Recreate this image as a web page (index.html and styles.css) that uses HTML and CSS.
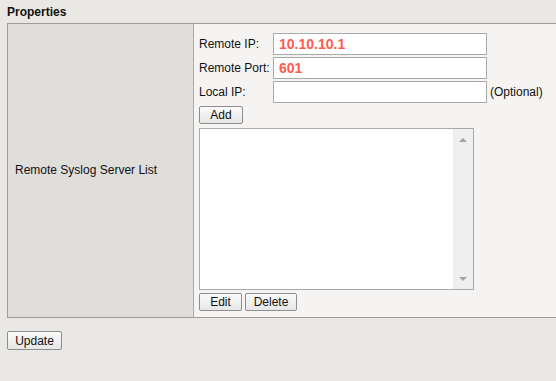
FILE: index.html
```html
<!DOCTYPE html>
<html>
<head>
<meta charset="utf-8">
<link rel="stylesheet" href="styles.css">
</head>
<body>
<div class="title">Properties</div>
<div class="panel">
  <div class="label-cell">Remote Syslog Server List</div>
  <div class="content-cell">
    <div class="form-grid">
      <label class="flabel">Remote IP:</label>
      <div class="input red">10.10.10.1</div>
      <span></span>
      <label class="flabel">Remote Port:</label>
      <div class="input red">601</div>
      <span></span>
      <label class="flabel">Local IP:</label>
      <div class="input"></div>
      <span class="opt">(Optional)</span>
    </div>
    <button class="btn add">Add</button>
    <div class="listbox">
      <div class="list-area"></div>
      <div class="scrollbar">
        <span class="arrow up"></span>
        <span class="arrow down"></span>
      </div>
    </div>
    <div class="actions">
      <button class="btn edit">Edit</button>
      <button class="btn del">Delete</button>
    </div>
  </div>
</div>
<button class="btn update">Update</button>
</body>
</html>
```
FILE: styles.css
```css
html, body {
  margin: 0;
  padding: 0;
  background: #e9e8e4;
  font-family: "Liberation Sans", Arial, sans-serif;
  font-size: 12px;
  color: #111;
  overflow: hidden;
}
.title {
  font-weight: bold;
  padding: 5px 0 0 7px;
  line-height: 15px;
  height: 15px;
}
.panel {
  display: flex;
  margin: 3px 0 0 7px;
  border: 1px solid #9c9c9c;
  border-right: none;
}
.label-cell {
  width: 178px;
  padding-left: 7px;
  background: #dfdedb;
  border-right: 1px solid #a9a9a9;
  display: flex;
  align-items: center;
  line-height: 14px;
  padding-bottom: 1px;
}
.content-cell {
  flex: 1;
  background: #f5f4f2;
  padding: 9px 0 6px 5px;
  display: flex;
  flex-direction: column;
  align-items: flex-start;
}
.form-grid {
  display: grid;
  grid-template-columns: 74px 214px auto;
  row-gap: 2px;
  align-items: center;
}
.flabel {
  line-height: 14px;
}
.input {
  box-sizing: border-box;
  height: 22px;
  border: 1px solid #a9a9a9;
  background: #fff;
  padding: 0 5px;
  line-height: 20px;
}
.red {
  color: #ff5b4f;
  font-weight: bold;
  font-size: 14px;
}
.opt {
  padding-left: 3px;
}
.btn {
  box-sizing: border-box;
  height: 18px;
  padding: 0;
  border: 1px solid #8e8e8e;
  border-radius: 2px;
  background: linear-gradient(#fbfbfb, #e6e6e6);
  font-family: "Liberation Sans", Arial, sans-serif;
  font-size: 12px;
  color: #111;
  line-height: 16px;
}
.add {
  margin-top: 3px;
  width: 44px;
}
.listbox {
  margin-top: 4px;
  box-sizing: border-box;
  width: 275px;
  height: 162px;
  border: 1px solid #a9a9a9;
  background: #fff;
  display: flex;
}
.list-area {
  flex: 1;
}
.scrollbar {
  width: 20px;
  background: #efefef;
  display: flex;
  flex-direction: column;
  justify-content: space-between;
  align-items: center;
  padding: 9px 0 8px;
}
.arrow {
  width: 0;
  height: 0;
  border-left: 4px solid transparent;
  border-right: 4px solid transparent;
}
.up {
  border-bottom: 4px solid #a3a3a3;
}
.down {
  border-top: 4px solid #a3a3a3;
}
.actions {
  margin-top: 3px;
  display: flex;
  gap: 3px;
}
.edit {
  width: 43px;
}
.del {
  width: 52px;
}
.update {
  margin: 13px 0 0 7px;
  width: 55px;
  height: 19px;
}
```
